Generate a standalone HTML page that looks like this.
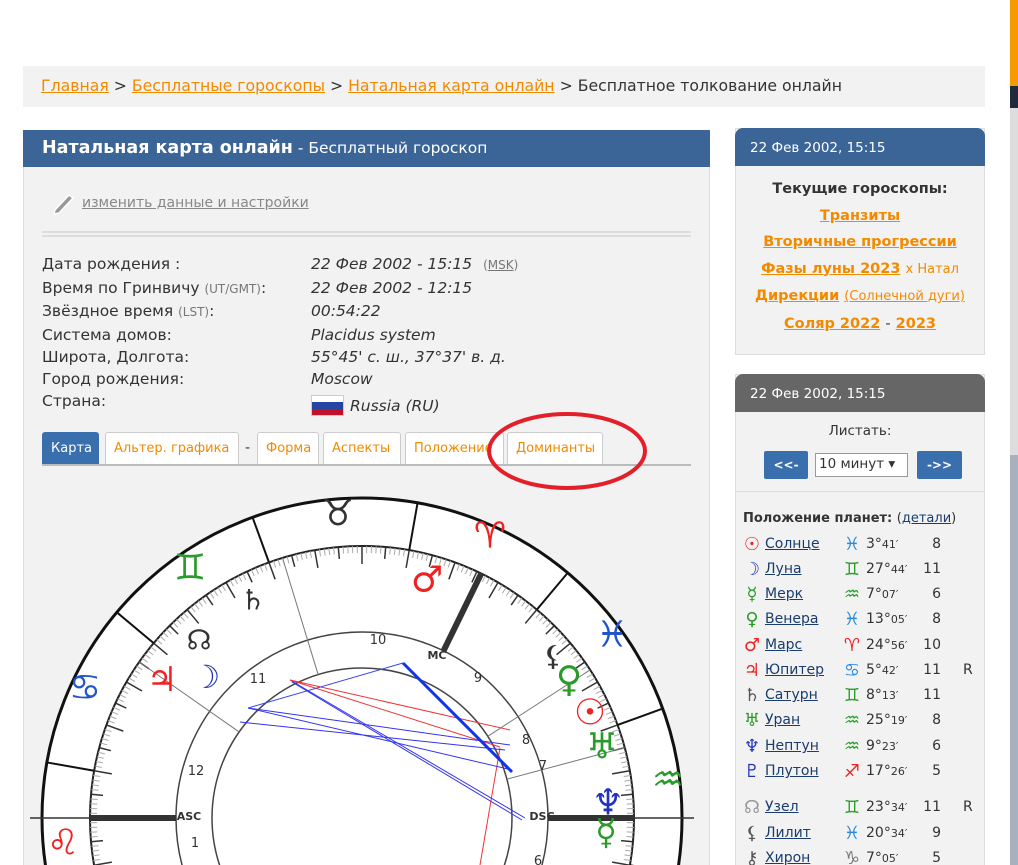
<!DOCTYPE html>
<html><head><meta charset="utf-8">
<style>
*{margin:0;padding:0;box-sizing:border-box}
html,body{width:1018px;height:865px;overflow:hidden}
body{background:#fff;font-family:"DejaVu Sans","Liberation Sans",sans-serif;color:#333;position:relative}
a{color:#f28a00}
.abs{position:absolute}
.bc{left:23px;top:66px;width:962px;height:41px;background:#f2f2f2;font-size:15.7px;padding:10px 0 0 18px;color:#333;white-space:nowrap}
.main{left:23px;top:130px;width:687px;height:735px;background:#f2f2f2;border:1px solid #ddd;border-bottom:none}
.mh{left:23px;top:130px;width:687px;height:37px;background:#3a6596;color:#fff;font-size:15.5px;padding:8px 0 0 19px;white-space:nowrap}
.mh b{font-size:17.5px}
.row{position:absolute;left:42px;font-size:15.5px;color:#333;white-space:nowrap}
.val{position:absolute;left:311px;font-size:15.5px;font-style:italic;color:#333;white-space:nowrap}
.sm{font-size:12px;color:#777}
.tab{position:absolute;top:432px;height:33px;border:1px solid #ccc;border-bottom:none;background:#fff;color:#f28a00;font-size:13px;padding:8px 0 0 8px;border-radius:3px 3px 0 0;white-space:nowrap}
.side{left:735px;width:250px;background:#f2f2f2;border:1px solid #ddd}
.sh{left:735px;width:250px;height:38px;color:#fff;font-size:13.5px;padding:12px 0 0 15px;border-radius:8px 8px 0 0}
.c{text-align:center;font-size:14.5px;font-weight:bold}
.c a{color:#f28a00}
.pl{position:absolute;left:743px;font-size:14px;width:240px;height:24px;white-space:nowrap}
.pl .n{position:absolute;left:22px;color:#1a3d6d;text-decoration:underline}
.pl .g{position:absolute;left:-1px;top:-2px;width:20px;text-align:center;font-size:18px}
.pl .s{position:absolute;left:98px;top:-2px;width:22px;text-align:center;font-size:18px}
.pl .d{position:absolute;left:123px}
.pl .d small{font-size:11px}
.pl .h{position:absolute;left:178px;width:20px;text-align:right}
.pl .r{position:absolute;left:220px}
.btn{position:absolute;top:451px;height:28px;background:#3a6fad;color:#fff;font-size:12px;font-weight:bold;text-align:center;padding-top:7px;border-radius:2px}
</style></head><body>
<div class="abs" style="left:1010px;top:0;width:8px;height:86px;background:#f79a00"></div>
<div class="abs" style="left:1010px;top:86px;width:8px;height:22px;background:#1f2a3d"></div>
<div class="abs" style="left:1010px;top:108px;width:8px;height:347px;background:#ddd"></div>
<div class="abs" style="left:1010px;top:455px;width:8px;height:410px;background:#a8b2be"></div>

<div class="abs bc"><a href="#">Главная</a> &gt; <a href="#">Бесплатные гороскопы</a> &gt; <a href="#">Натальная карта онлайн</a> &gt; Бесплатное толкование онлайн</div>

<div class="abs main"></div>
<div class="abs mh"><b>Натальная карта онлайн</b> - Бесплатный гороскоп</div>
<svg class="abs" style="left:50px;top:190px" width="26" height="26" viewBox="0 0 26 26"><path d="M5 20 L19 5 L23 8 L9 23 L4 24 Z" fill="#999" stroke="#fff" stroke-width="1.5"/></svg>
<a class="abs" href="#" style="left:82px;top:195px;font-size:14px;color:#888;white-space:nowrap">изменить данные и настройки</a>
<div class="abs" style="left:42px;top:231px;width:649px;height:6px;border-top:2px solid #ddd;border-bottom:2px solid #ddd"></div>

<div class="row" style="top:255px">Дата рождения :</div><div class="val" style="top:255px">22 Фев 2002 - 15:15 <span class="sm" style="font-style:normal;margin-left:6px">(<u>MSK</u>)</span></div>
<div class="row" style="top:279px">Время по Гринвичу <span class="sm">(UT/GMT)</span>:</div><div class="val" style="top:279px">22 Фев 2002 - 12:15</div>
<div class="row" style="top:302px">Звёздное время <span class="sm">(LST)</span>:</div><div class="val" style="top:302px">00:54:22</div>
<div class="row" style="top:326px">Система домов:</div><div class="val" style="top:326px">Placidus system</div>
<div class="row" style="top:348px">Широта, Долгота:</div><div class="val" style="top:348px">55°45' с. ш., 37°37' в. д.</div>
<div class="row" style="top:370px">Город рождения:</div><div class="val" style="top:370px">Moscow</div>
<div class="row" style="top:392px">Страна:</div>
<div class="abs" style="left:311px;top:395px;width:33px;height:21px;border:1px solid #ccc"><div style="height:6px;background:#fff"></div><div style="height:7px;background:#2446a0"></div><div style="height:6px;background:#c0102a"></div></div>
<div class="val" style="top:397px;left:350px">Russia (RU)</div>

<div class="tab" style="left:42px;width:57px;background:#3a6fad;color:#fff;border-color:#3a6fad">Карта</div>
<div class="tab" style="left:105px;width:134px">Альтер. графика</div>
<div class="abs" style="left:245px;top:440px;font-size:14px">-</div>
<div class="tab" style="left:257px;width:62px">Форма</div>
<div class="tab" style="left:323px;width:78px">Аспекты</div>
<div class="tab" style="left:405px;width:99px;overflow:hidden">Положение</div>
<div class="tab" style="left:507px;width:96px">Доминанты</div>
<div class="abs" style="left:42px;top:464px;width:649px;height:2px;background:#bbb"></div>

<svg class="abs" id="ch" style="left:0;top:0" width="710" height="865">
<g font-family="DejaVu Sans,sans-serif" font-size="36" text-anchor="middle" dominant-baseline="central">
<text x="338" y="514" fill="#333">♉</text>
<text x="490" y="536" fill="#e22">♈</text>
<text x="190" y="568" fill="#2a9a2a">♊</text>
<text x="85" y="688" fill="#2255cc">♋</text>
<text x="63" y="843" fill="#e22">♌</text>
<text x="612" y="635" fill="#2255cc">♓</text>
<text x="668" y="780" fill="#2a9a2a">♒</text>
<text x="427" y="580" fill="#e22">♂</text>
<text x="253" y="600" fill="#333" font-size="28">♄</text>
<text x="199" y="640" fill="#333" font-size="28">☊</text>
<text x="206" y="677" fill="#2233bb" font-size="32">☽</text>
<text x="162" y="680" fill="#e22" font-size="34">♃</text>
<text x="553" y="656" fill="#333" font-size="28">⚸</text>
<text x="569" y="680" fill="#2a9a2a">♀</text>
<text x="590" y="713" fill="#e22">☉</text>
<text x="602" y="747" fill="#2a9a2a">♅</text>
<text x="608" y="803" fill="#2233bb">♆</text>
<text x="606" y="833" fill="#2a9a2a">☿</text>
</g>
<g font-family="DejaVu Sans,sans-serif" font-size="13" fill="#333" text-anchor="middle">
<text x="378" y="644">10</text><text x="478" y="682">9</text><text x="258" y="683">11</text><text x="526" y="744">8</text><text x="196" y="775">12</text><text x="543" y="770">7</text><text x="195" y="847">1</text><text x="538" y="865">6</text>
<text x="437" y="659" font-size="11" font-weight="bold">MC</text>
<text x="189" y="820" font-size="11" font-weight="bold">ASC</text>
<text x="542" y="820" font-size="11" font-weight="bold">DSC</text>
</g>
</svg>
<svg class="abs" style="left:480px;top:405px" width="180" height="90"><ellipse cx="87" cy="46" rx="78" ry="37" fill="none" stroke="#e3202a" stroke-width="4"/></svg>

<div class="abs side" style="top:128px;height:227px"></div>
<div class="abs sh" style="top:128px;background:#3a6596">22 Фев 2002, 15:15</div>
<div class="abs c" style="left:735px;width:250px;top:176px;line-height:26.5px;white-space:nowrap">Текущие гороскопы:<br><a href="#">Транзиты</a><br><a href="#">Вторичные прогрессии</a><br><a href="#">Фазы луны 2023</a> <span style="font-weight:normal;font-size:13px;color:#f28a00">x Натал</span><br><a href="#">Дирекции</a> <span style="font-weight:normal;font-size:13px;color:#f28a00"><u>(Солнечной дуги)</u></span><br><a href="#">Соляр 2022</a> <span style="font-weight:normal">-</span> <a href="#">2023</a></div>

<div class="abs side" style="top:374px;height:491px;border-bottom:none"></div>
<div class="abs sh" style="top:374px;background:#666">22 Фев 2002, 15:15</div>
<div class="abs" style="left:735px;width:250px;top:423px;text-align:center;font-size:13.5px">Листать:</div>
<div class="btn" style="left:764px;width:44px">&lt;&lt;-</div>
<div class="abs" style="left:815px;top:453px;width:93px;height:24px;background:#fff;border:1px solid #999;font-size:13.5px;padding:2px 0 0 3px;white-space:nowrap">10 минут ▾</div>
<div class="btn" style="left:917px;width:45px">-&gt;&gt;</div>
<div class="abs" style="left:736px;top:491px;width:248px;height:1px;background:#ddd"></div>
<div class="abs" style="left:743px;top:511px;font-size:13px;font-weight:bold;white-space:nowrap">Положение планет: <span style="font-weight:normal">(<u style="color:#1a3d6d">детали</u>)</span></div>

<div class="pl" style="top:536px"><span class="g" style="color:#e22">☉</span><span class="n">Солнце</span><span class="s" style="color:#2a8ae0">♓</span><span class="d">3°<small>41′</small></span><span class="h">8</span></div>
<div class="pl" style="top:561px"><span class="g" style="color:#2233bb">☽</span><span class="n">Луна</span><span class="s" style="color:#2a9a2a">♊</span><span class="d">27°<small>44′</small></span><span class="h">11</span></div>
<div class="pl" style="top:586px"><span class="g" style="color:#2a9a2a">☿</span><span class="n">Мерк</span><span class="s" style="color:#2a9a2a">♒</span><span class="d">7°<small>07′</small></span><span class="h">6</span></div>
<div class="pl" style="top:611px"><span class="g" style="color:#2a9a2a">♀</span><span class="n">Венера</span><span class="s" style="color:#2a8ae0">♓</span><span class="d">13°<small>05′</small></span><span class="h">8</span></div>
<div class="pl" style="top:637px"><span class="g" style="color:#e22">♂</span><span class="n">Марс</span><span class="s" style="color:#e22">♈</span><span class="d">24°<small>56′</small></span><span class="h">10</span></div>
<div class="pl" style="top:662px"><span class="g" style="color:#e22">♃</span><span class="n">Юпитер</span><span class="s" style="color:#2a8ae0">♋</span><span class="d">5°<small>42′</small></span><span class="h">11</span><span class="r">R</span></div>
<div class="pl" style="top:687px"><span class="g" style="color:#555">♄</span><span class="n">Сатурн</span><span class="s" style="color:#2a9a2a">♊</span><span class="d">8°<small>13′</small></span><span class="h">11</span></div>
<div class="pl" style="top:712px"><span class="g" style="color:#2a9a2a">♅</span><span class="n">Уран</span><span class="s" style="color:#2a9a2a">♒</span><span class="d">25°<small>19′</small></span><span class="h">8</span></div>
<div class="pl" style="top:738px"><span class="g" style="color:#2233bb">♆</span><span class="n">Нептун</span><span class="s" style="color:#2a9a2a">♒</span><span class="d">9°<small>23′</small></span><span class="h">6</span></div>
<div class="pl" style="top:763px"><span class="g" style="color:#2233bb">♇</span><span class="n">Плутон</span><span class="s" style="color:#e22">♐</span><span class="d">17°<small>26′</small></span><span class="h">5</span></div>
<div class="pl" style="top:799px"><span class="g" style="color:#999">☊</span><span class="n">Узел</span><span class="s" style="color:#2a9a2a">♊</span><span class="d">23°<small>34′</small></span><span class="h">11</span><span class="r">R</span></div>
<div class="pl" style="top:825px"><span class="g" style="color:#555">⚸</span><span class="n">Лилит</span><span class="s" style="color:#2a8ae0">♓</span><span class="d">20°<small>34′</small></span><span class="h">9</span></div>
<div class="pl" style="top:850px;height:15px;overflow:hidden"><span class="g" style="color:#555">⚷</span><span class="n">Хирон</span><span class="s" style="color:#777">♑</span><span class="d">7°<small>05′</small></span><span class="h">5</span></div>

<script>
(function(){
var s=document.getElementById('ch'),NS='http://www.w3.org/2000/svg',cx=362,cy=818;
function el(t,a){var e=document.createElementNS(NS,t);for(var k in a)e.setAttribute(k,a[k]);s.insertBefore(e,s.firstChild);return e;}
function P(r,d){var a=d*Math.PI/180;return [cx+r*Math.cos(a),cy-r*Math.sin(a)];}
function L(r1,r2,d,c,w){var a=P(r1,d),b=P(r2,d);el('line',{x1:a[0],y1:a[1],x2:b[0],y2:b[1],stroke:c,'stroke-width':w});}
var asp=[[[403,663],[512,772],'#1133ee',3],[[403,663],[248,708],'#3344ee',1],[[290,680],[500,747],'#e33',1],[[290,680],[510,730],'#e33',1],[[290,680],[525,818],'#33e',1],[[292,682],[522,820],'#33e',1],[[248,708],[510,745],'#33e',1],[[248,708],[512,770],'#33e',1],[[240,722],[505,750],'#33e',1],[[500,748],[480,865],'#e33',1]];
asp.forEach(function(a){el('line',{x1:a[0][0],y1:a[0][1],x2:a[1][0],y2:a[1][1],stroke:a[2],'stroke-width':a[3]});});
[107,145,33,15].forEach(function(d){L(150,272,d,'#777',1);});
L(186,272,64,'#333',6);L(186,272,244,'#333',6);
L(186,272,180,'#333',6);L(186,272,0,'#333',6);
L(272,332,180,'#333',1.5);L(272,332,0,'#333',1.5);
for(var i=0;i<360;i++){var d=i+50;var len=(i%10==0)?18:(i%5==0?12:7);L(272-len,272,d,i%5==0?'#333':'#aaa',i%5==0?1.5:1);}
for(var k=0;k<12;k++)L(272,320,50+30*k,'#111',2);
el('circle',{cx:cx,cy:cy,r:150,fill:'#fff',stroke:'#444','stroke-width':1.5});
el('circle',{cx:cx,cy:cy,r:186,fill:'#fff',stroke:'#444','stroke-width':1.5});
el('circle',{cx:cx,cy:cy,r:272,fill:'#fff',stroke:'#222','stroke-width':2});
el('circle',{cx:cx,cy:cy,r:320,fill:'#fff',stroke:'#111','stroke-width':3});
})();
</script>
</body></html>
